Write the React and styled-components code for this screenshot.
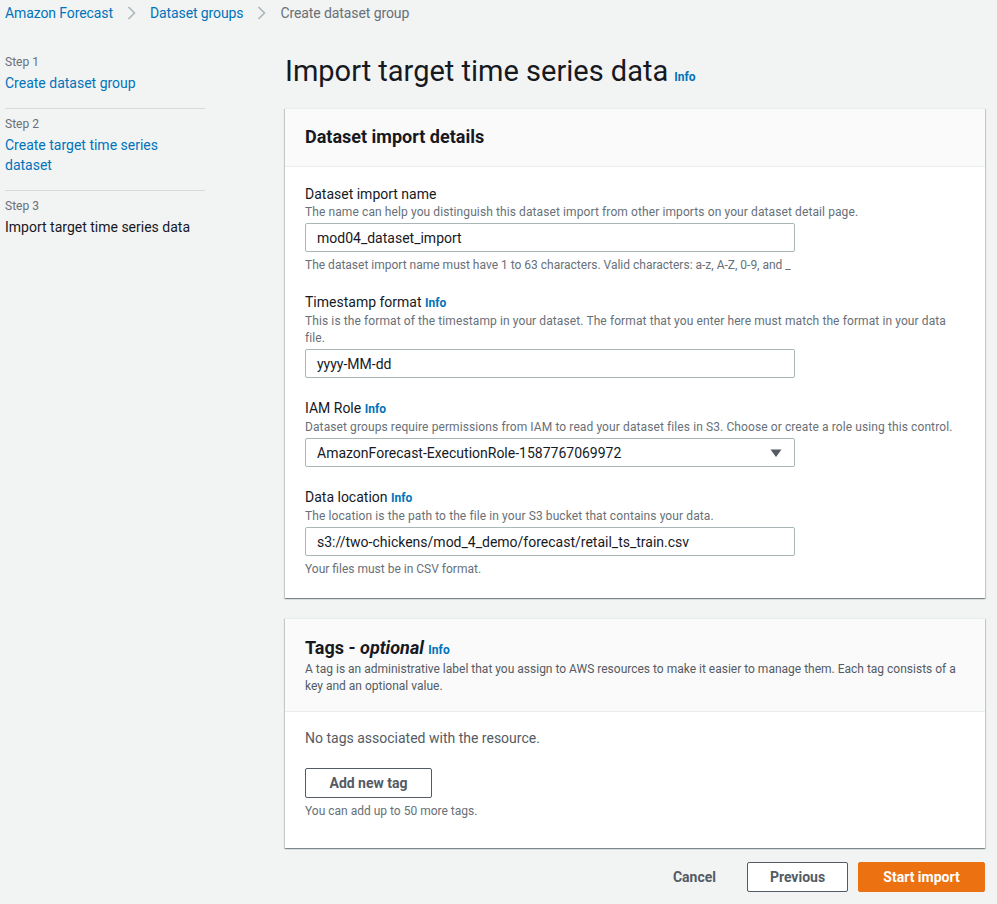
import React from "react";
import styled, { createGlobalStyle } from "styled-components";

const Global = createGlobalStyle`
  html, body { margin: 0; padding: 0; background: #f2f3f3; }
  body { font-family: Roboto, "Noto Sans", sans-serif; color: #16191f; }
  * { box-sizing: border-box; }
`;

const Page = styled.div`
  width: 997px;
  min-height: 904px;
  background: #f2f3f3;
`;

const Crumbs = styled.nav`
  display: flex;
  align-items: center;
  height: 25px;
  padding-left: 5px;
  font-size: 14px;
  letter-spacing: -0.1px;
`;

const Crumb = styled.span`
  color: ${(p) => (p.$current ? "#687078" : "#0073bb")};
`;

const Chevron = styled.span`
  display: inline-flex;
  width: 37px;
  justify-content: center;
  color: #aab7b8;
`;

const Layout = styled.div`
  display: grid;
  grid-template-columns: 200px 700px;
  column-gap: 80px;
  padding: 0 12px 0 5px;
`;

const Steps = styled.ol`
  list-style: none;
  margin: 29px 0 0;
  padding: 0;
`;

const Step = styled.li`
  padding: ${(p) => (p.$first ? "0" : "7px")} 0 15px;
  border-bottom: ${(p) => (p.$last ? "none" : "1px solid #d5dbdb")};
`;

const StepNum = styled.div`
  font-size: 12px;
  line-height: 17px;
  color: #687078;
`;

const StepName = styled.div`
  font-size: 14px;
  line-height: 20px;
  margin-top: 2px;
  color: ${(p) => (p.$active ? "#16191f" : "#0073bb")};
`;

const Main = styled.main`
  display: flex;
  flex-direction: column;
`;

const Title = styled.h1`
  margin: 28px 0 0;
  height: 55px;
  font-size: 29px;
  font-weight: 400;
  line-height: 36px;
  color: #16191f;
  display: flex;
  align-items: baseline;
  gap: 6px;
`;

const Info = styled.span`
  color: #0073bb;
  font-size: 12px;
  font-weight: 700;
  letter-spacing: 0;
`;

const Panel = styled.section`
  background: #fff;
  border-top: 1px solid #eaeded;
  box-shadow: 0 1px 1px 0 rgba(0, 28, 36, 0.3), 1px 1px 1px 0 rgba(0, 28, 36, 0.15),
    -1px 1px 1px 0 rgba(0, 28, 36, 0.15);
  margin-bottom: 20px;
`;

const PanelHead = styled.header`
  background: #fafafa;
  border-bottom: 1px solid #eaeded;
  padding: ${(p) => p.$pad || "17px 20px 18px"};
`;

const PanelTitle = styled.h2`
  margin: 0;
  font-size: 18px;
  font-weight: 700;
  line-height: 22px;
  color: #16191f;
  em { font-style: italic; }
`;

const PanelDesc = styled.p`
  margin: 0;
  font-size: 12px;
  line-height: 17px;
  color: #545b64;
`;

const PanelBody = styled.div`
  padding: ${(p) => p.$pad || "17px 20px 20px"};
  display: flex;
  flex-direction: column;
`;

const Field = styled.div`
  margin-bottom: ${(p) => p.$mb || "20px"};
  &:last-child { margin-bottom: 0; }
`;

const Label = styled.div`
  font-size: 14px;
  line-height: 20px;
  color: #16191f;
`;

const Desc = styled.div`
  font-size: 12px;
  line-height: 17px;
  letter-spacing: 0.1px;
  color: #687078;
  padding-right: ${(p) => p.$pr || "0"};
`;

const Input = styled.div`
  margin-top: 2px;
  width: 490px;
  height: 29px;
  border: 1px solid #aab7b8;
  border-radius: 2px;
  background: #fff;
  display: flex;
  align-items: center;
  justify-content: space-between;
  padding: 0 12px 0 11px;
  font-size: 14px;
  color: #16191f;
`;

const Hint = styled.div`
  margin-top: 5px;
  font-size: 12px;
  line-height: 17px;
  color: #687078;
`;

const Muted = styled.div`
  font-size: 14px;
  line-height: 20px;
  color: #545b64;
`;

const ButtonRow = styled.div`
  display: flex;
  margin-top: 20px;
`;

const Button = styled.button`
  font-family: inherit;
  font-size: 14px;
  font-weight: 700;
  height: 30px;
  padding: 0 20px;
  border-radius: 2px;
  border: 1px solid ${(p) => (p.$primary ? "#ec7211" : p.$plain ? "transparent" : "#545b64")};
  background: ${(p) => (p.$primary ? "#ec7211" : p.$plain ? "transparent" : "#fff")};
  color: ${(p) => (p.$primary ? "#fff" : "#545b64")};
  width: ${(p) => p.$w || "auto"};
  cursor: pointer;
`;

const Actions = styled.div`
  display: flex;
  justify-content: flex-end;
  gap: 10px;
  margin-top: -6px;
`;

function Caret() {
  return (
    <svg width="12" height="10" viewBox="0 0 12 10">
      <path d="M0.5 1.5 H11.5 L6 9 Z" fill="#545b64" />
    </svg>
  );
}

function ChevronIcon() {
  return (
    <svg width="9" height="14" viewBox="0 0 9 14">
      <path d="M1.5 1 L7.5 7 L1.5 13" fill="none" stroke="#aab7b8" strokeWidth="1.6" />
    </svg>
  );
}

export default function App() {
  return (
    <Page>
      <Global />
      <Crumbs>
        <Crumb>Amazon Forecast</Crumb>
        <Chevron><ChevronIcon /></Chevron>
        <Crumb>Dataset groups</Crumb>
        <Chevron><ChevronIcon /></Chevron>
        <Crumb $current>Create dataset group</Crumb>
      </Crumbs>
      <Layout>
        <Steps>
          <Step $first>
            <StepNum>Step 1</StepNum>
            <StepName>Create dataset group</StepName>
          </Step>
          <Step>
            <StepNum>Step 2</StepNum>
            <StepName>Create target time series dataset</StepName>
          </Step>
          <Step $last>
            <StepNum>Step 3</StepNum>
            <StepName $active>Import target time series data</StepName>
          </Step>
        </Steps>
        <Main>
          <Title>
            Import target time series data
            <Info>Info</Info>
          </Title>
          <Panel>
            <PanelHead>
              <PanelTitle>Dataset import details</PanelTitle>
            </PanelHead>
            <PanelBody>
              <Field $mb="18px">
                <Label>Dataset import name</Label>
                <Desc>The name can help you distinguish this dataset import from other imports on your dataset detail page.</Desc>
                <Input>mod04_dataset_import</Input>
                <Hint>The dataset import name must have 1 to 63 characters. Valid characters: a-z, A-Z, 0-9, and _</Hint>
              </Field>
              <Field>
                <Label>Timestamp format <Info>Info</Info></Label>
                <Desc $pr="10px">This is the format of the timestamp in your dataset. The format that you enter here must match the format in your data file.</Desc>
                <Input>yyyy-MM-dd</Input>
              </Field>
              <Field>
                <Label>IAM Role <Info>Info</Info></Label>
                <Desc>Dataset groups require permissions from IAM to read your dataset files in S3. Choose or create a role using this control.</Desc>
                <Input>
                  AmazonForecast-ExecutionRole-1587767069972
                  <Caret />
                </Input>
              </Field>
              <Field>
                <Label>Data location <Info>Info</Info></Label>
                <Desc>The location is the path to the file in your S3 bucket that contains your data.</Desc>
                <Input>s3://two-chickens/mod_4_demo/forecast/retail_ts_train.csv</Input>
                <Hint>Your files must be in CSV format.</Hint>
              </Field>
            </PanelBody>
          </Panel>
          <Panel>
            <PanelHead $pad="18px 20px 16px">
              <PanelTitle>Tags - <em>optional</em> <Info>Info</Info></PanelTitle>
              <PanelDesc>A tag is an administrative label that you assign to AWS resources to make it easier to manage them. Each tag consists of a key and an optional value.</PanelDesc>
            </PanelHead>
            <PanelBody $pad="16px 20px 28px">
              <Muted>No tags associated with the resource.</Muted>
              <ButtonRow>
                <Button $w="127px">Add new tag</Button>
              </ButtonRow>
              <Hint>You can add up to 50 more tags.</Hint>
            </PanelBody>
          </Panel>
          <Actions>
            <Button $plain>Cancel</Button>
            <Button $w="101px">Previous</Button>
            <Button $primary $w="127px">Start import</Button>
          </Actions>
        </Main>
      </Layout>
    </Page>
  );
}
